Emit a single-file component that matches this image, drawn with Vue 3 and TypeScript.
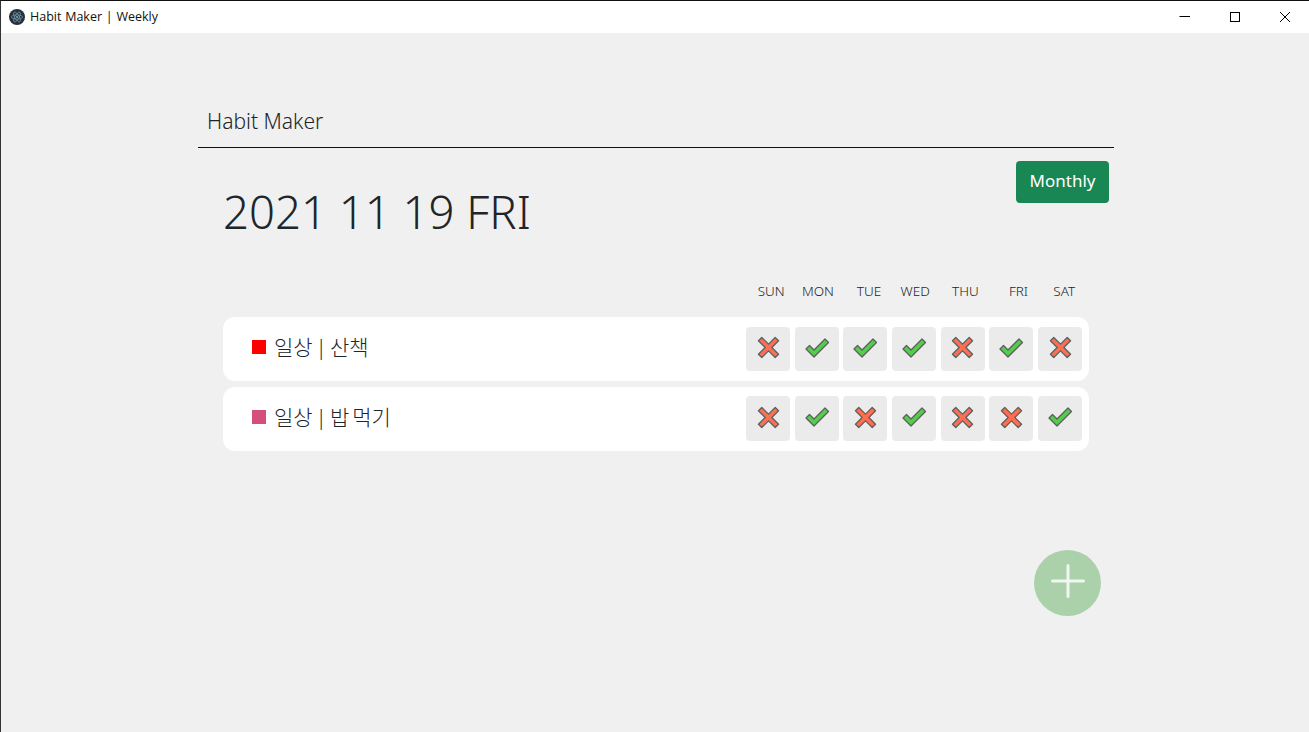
<template>
  <div class="window">
    <div class="titlebar">
      <div class="app-title">
        <svg class="app-icon" width="16" height="16" viewBox="0 0 16 16">
          <circle cx="8" cy="8" r="8" fill="#2b2e3b" />
          <g fill="none" stroke="#9feaf9" stroke-width="0.7" opacity="0.6">
            <ellipse cx="8" cy="8" rx="5.6" ry="2.2" />
            <ellipse cx="8" cy="8" rx="5.6" ry="2.2" transform="rotate(60 8 8)" />
            <ellipse cx="8" cy="8" rx="5.6" ry="2.2" transform="rotate(120 8 8)" />
          </g>
          <circle cx="8" cy="8" r="1" fill="#9feaf9" opacity="0.7" />
        </svg>
        <span>Habit Maker | Weekly</span>
      </div>
      <div class="win-controls">
        <button class="win-btn">
          <svg width="12" height="12" viewBox="0 0 12 12"><path d="M0.500 5.500h10.500" stroke="#000" fill="none" /></svg>
        </button>
        <button class="win-btn">
          <svg width="12" height="12" viewBox="0 0 12 12"><rect x="1.500" y="1.500" width="9" height="9" stroke="#000" fill="none" /></svg>
        </button>
        <button class="win-btn">
          <svg width="12" height="12" viewBox="0 0 12 12"><path d="M1 1l10 10M11 1L1 11" stroke="#000" fill="none" stroke-width="1" /></svg>
        </button>
      </div>
    </div>

    <main class="content">
      <div class="container">
        <header class="page-header">Habit Maker</header>

        <div class="date-row">
          <h1 class="date">2021 11 19 FRI</h1>
          <button class="monthly">Monthly</button>
        </div>

        <div class="habits">
          <div class="day-labels">
            <span v-for="d in days" :key="d.name" class="day" :style="{ paddingLeft: d.nudge + 'px' }">{{ d.name }}</span>
          </div>

          <div v-for="habit in habits" :key="habit.title" class="habit">
            <div class="habit-name">
              <span class="swatch" :style="{ background: habit.color }"></span>
              <span>{{ habit.category }} | {{ habit.title }}</span>
            </div>
            <div class="checks">
              <div v-for="(done, i) in habit.week" :key="i" class="check">
                <svg v-if="done" width="26" height="22" viewBox="0 0 26 22">
                  <polygon points="2,12 5.500,8.500 10,13 21,2 24.500,5.500 10,20" fill="#52ce4b" stroke="#5e5e5e" stroke-width="1.300" stroke-linejoin="round" />
                </svg>
                <svg v-else width="23" height="23" viewBox="0 0 24 24">
                  <polygon points="5,1.500 12,8.500 19,1.500 22.500,5 15.500,12 22.500,19 19,22.500 12,15.500 5,22.500 1.500,19 8.500,12 1.500,5" fill="#ff6e50" stroke="#5e5e5e" stroke-width="1.300" stroke-linejoin="round" />
                </svg>
              </div>
            </div>
          </div>
        </div>
      </div>

      <button class="fab">
        <svg width="34" height="34" viewBox="0 0 34 34">
          <path d="M17 1.500v31M1.500 17h31" stroke="#f2f5f0" stroke-width="3" stroke-linecap="round" fill="none" />
        </svg>
      </button>
    </main>
  </div>
</template>

<script setup lang="ts">
interface Habit {
  category: string
  title: string
  color: string
  week: boolean[]
}

const days = [
  { name: 'SUN', nudge: 6 },
  { name: 'MON', nudge: 2 },
  { name: 'TUE', nudge: 7 },
  { name: 'WED', nudge: 2 },
  { name: 'THU', nudge: 5 },
  { name: 'FRI', nudge: 14 },
  { name: 'SAT', nudge: 8 },
]

const habits: Habit[] = [
  {
    category: '일상',
    title: '산책',
    color: '#ff0000',
    week: [false, true, true, true, false, true, false],
  },
  {
    category: '일상',
    title: '밥 먹기',
    color: '#d44f7e',
    week: [false, true, false, true, false, false, true],
  },
]
</script>

<style>
html,
body {
  margin: 0;
  background: #f0f0f0;
}
</style>

<style scoped>
.window {
  width: 1309px;
  height: 732px;
  box-sizing: border-box;
  border-top: 1px solid #111;
  border-left: 1px solid #333;
  display: flex;
  flex-direction: column;
  font-family: "Noto Sans", "Noto Sans CJK KR", sans-serif;
  color: #212529;
  background: #f0f0f0;
}

.titlebar {
  height: 32px;
  box-sizing: border-box;
  padding-bottom: 1px;
  flex-shrink: 0;
  background: #fff;
  display: flex;
  align-items: center;
  justify-content: space-between;
}

.app-title {
  display: flex;
  align-items: center;
  gap: 5px;
  padding-left: 8px;
  font-family: "Open Sans", sans-serif;
  font-size: 12.500px;
  word-spacing: 0.500px;
  color: #111;
}

.win-controls {
  display: flex;
}

.win-btn {
  width: 50px;
  height: 31px;
  border: 0;
  padding: 0 0 0 2px;
  background: none;
  display: flex;
  align-items: center;
  justify-content: center;
}

.content {
  flex: 1;
  position: relative;
}

.container {
  width: 916px;
  margin-left: 197px;
}

.page-header {
  height: 115px;
  box-sizing: border-box;
  padding: 73px 0 0 9px;
  font-size: 21px;
  font-weight: 300;
  line-height: 30px;
  border-bottom: 1px solid #111;
}

.date-row {
  display: flex;
  justify-content: space-between;
  align-items: flex-start;
  padding: 13px 5px 0 25px;
}

.date {
  margin: 20px 0 0;
  font-size: 45.500px;
  font-weight: 300;
  line-height: 60px;
}

.monthly {
  width: 93px;
  height: 42px;
  padding: 0 0 4px;
  border: 0;
  border-radius: 4px;
  background: #198754;
  color: #fff;
  font-family: inherit;
  font-size: 17px;
  font-weight: 400;
}

.habits {
  width: 866px;
  margin: 38px 0 0 25px;
}

.day-labels {
  display: grid;
  grid-template-columns: repeat(7, 48.670px);
  justify-content: end;
  padding-right: 4.500px;
  margin-bottom: 14px;
  height: 24px;
  line-height: 24px;
  font-size: 13.500px;
  font-weight: 300;
}

.day {
  text-align: center;
  box-sizing: border-box;
}

.habit {
  height: 64px;
  margin-bottom: 6px;
  background: #fff;
  border-radius: 12px;
  display: flex;
  align-items: center;
  justify-content: space-between;
  padding: 0 7px 0 29px;
}

.habit-name {
  display: flex;
  align-items: center;
  gap: 8px;
  font-size: 21px;
  font-weight: 300;
  word-spacing: -2.500px;
  margin-top: -7px;
}

.swatch {
  width: 14px;
  height: 14px;
  flex-shrink: 0;
  margin-top: 2px;
}

.checks {
  display: flex;
  gap: 4.670px;
}

.check {
  width: 44px;
  height: 44px;
  border-radius: 4px;
  background: #ebebeb;
  display: flex;
  align-items: center;
  justify-content: center;
}

.habit:last-child .checks {
  margin-bottom: 1px;
}

.habit:last-child .check {
  height: 45px;
}

.check svg {
  margin-bottom: 3px;
}

.fab {
  position: absolute;
  left: 1033px;
  top: 517px;
  width: 67px;
  height: 66px;
  padding: 0 0 4px;
  border: 0;
  border-radius: 50%;
  background: #aad1aa;
  display: flex;
  align-items: center;
  justify-content: center;
}
</style>
